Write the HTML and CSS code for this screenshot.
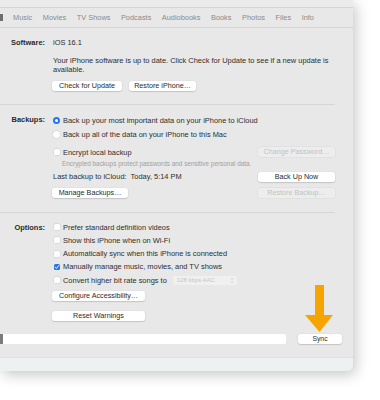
FILE: index.html
```html
<!DOCTYPE html>
<html>
<head>
<meta charset="utf-8">
<link rel="stylesheet" href="styles.css">
</head>
<body>
<div class="window">
  <div class="topstrip"></div>
  <nav class="tabs">
    <span class="tab-mark"></span>
    <span>Music</span><span>Movies</span><span>TV Shows</span><span>Podcasts</span><span>Audiobooks</span><span>Books</span><span>Photos</span><span>Files</span><span>Info</span>
  </nav>
  <main class="content">
    <section class="sec sec-software">
      <div class="label">Software:</div>
      <div class="body">
        <div class="line">iOS 16.1</div>
        <p class="para">Your iPhone software is up to date. Click Check for Update to see if a new update is available.</p>
        <div class="btnrow">
          <button class="btn w-check">Check for Update</button>
          <button class="btn w-restore">Restore iPhone…</button>
        </div>
      </div>
    </section>
    <section class="sec sec-backups">
      <div class="label">Backups:</div>
      <div class="body">
        <div class="opt opt-tall"><span class="radio on"></span>Back up your most important data on your iPhone to iCloud</div>
        <div class="opt opt-tall"><span class="radio"></span>Back up all of the data on your iPhone to this Mac</div>
        <div class="split r-encrypt">
          <div class="opt"><span class="check"></span>Encrypt local backup</div>
          <button class="btn side disabled">Change Password…</button>
        </div>
        <div class="hint">Encrypted backups protect passwords and sensitive personal data.</div>
        <div class="split r-last">
          <div class="line">Last backup to iCloud:&nbsp; Today, 5:14 PM</div>
          <button class="btn side">Back Up Now</button>
        </div>
        <div class="split r-manage">
          <button class="btn w-manage">Manage Backups…</button>
          <button class="btn side disabled">Restore Backup…</button>
        </div>
      </div>
    </section>
    <section class="sec sec-options">
      <div class="label">Options:</div>
      <div class="body">
        <div class="opt orow"><span class="check"></span>Prefer standard definition videos</div>
        <div class="opt orow"><span class="check"></span>Show this iPhone when on Wi-Fi</div>
        <div class="opt orow"><span class="check"></span>Automatically sync when this iPhone is connected</div>
        <div class="opt orow"><span class="check on"><svg viewBox="0 0 10 10" width="6" height="6"><path d="M2 5.2 L4.2 7.4 L8 2.6" fill="none" stroke="#fff" stroke-width="1.6" stroke-linecap="round" stroke-linejoin="round"/></svg></span>Manually manage music, movies, and TV shows</div>
        <div class="opt orow"><span class="check"></span>Convert higher bit rate songs to<span class="popup"><span class="pop-text">128 kbps AAC</span><svg class="chev" width="4" height="7" viewBox="0 0 4 7"><path d="M0.6 2.6 L2 1.2 L3.4 2.6 M0.6 4.4 L2 5.8 L3.4 4.4" fill="none" stroke="#c8c8c8" stroke-width="0.7"/></svg></span></div>
        <button class="btn w-config b-config">Configure Accessibility…</button>
        <button class="btn w-config b-reset">Reset Warnings</button>
      </div>
    </section>
  </main>
  <div class="bottombar">
    <div class="capacity"><span class="cap-seg"></span></div>
    <button class="btn sync">Sync</button>
  </div>
  <div class="footer"></div>
</div>
<svg class="arrow" width="28" height="47" viewBox="0 0 28 47">
  <path d="M10 0 H19 V30 H28 L14.5 47 L0 30 H10 Z" fill="#f6a500"/>
</svg>
</body>
</html>
```
FILE: styles.css
```css
html, body {
  margin: 0;
  padding: 0;
}
body {
  width: 380px;
  height: 400px;
  overflow: hidden;
  background: #ffffff;
  font-family: "Liberation Sans", Arial, sans-serif;
  font-size: 7.45px;
  color: #2e2e2e;
  position: relative;
}
.window {
  width: 353px;
  height: 371px;
  background: #e8e8e8;
  border-bottom-right-radius: 6px;
  box-shadow: 3px 4px 14px rgba(0, 0, 0, 0.22);
  display: flex;
  flex-direction: column;
  overflow: hidden;
}
.topstrip {
  height: 7px;
  flex: none;
  background: #ebebeb;
  border-bottom: 1px solid #d5d5d5;
}
.tabs {
  height: 19px;
  flex: none;
  display: flex;
  align-items: center;
  gap: 10.5px;
  color: #8b8b8b;
  font-size: 7.4px;
  border-bottom: 1px solid #d5d5d5;
}
.tab-mark {
  width: 3px;
  height: 7px;
  background: #6e6e6e;
  margin-right: -0.5px;
}
.content {
  flex: 1;
}
.sec {
  display: flex;
  width: 335px;
}
.label {
  width: 45px;
  flex: none;
  text-align: right;
  font-weight: bold;
  color: #2a2a2a;
}
.body {
  margin-left: 8px;
  flex: 1;
  display: flex;
  flex-direction: column;
  align-items: flex-start;
}
.sec-software {
  padding: 10px 0 13px;
  border-bottom: 1px solid #d6d6d6;
}
.sec-software .label,
.line {
  line-height: 10px;
  height: 10px;
}
.para {
  margin: 7.5px 0 0;
  width: 276px;
  line-height: 9px;
}
.btnrow {
  display: flex;
  gap: 7px;
  margin-top: 7.5px;
  margin-left: -1px;
}
.btn {
  display: block;
  height: 10px;
  padding: 0;
  border: none;
  border-radius: 2.5px;
  background: #ffffff;
  box-shadow: 0 0.5px 1.2px rgba(0, 0, 0, 0.28);
  font-family: inherit;
  font-size: 7.2px;
  line-height: 10px;
  color: #2a2a2a;
  text-align: center;
  white-space: nowrap;
}
.btn.disabled {
  background: #ededed;
  color: #c2c2c2;
  box-shadow: 0 0 0 0.5px rgba(0, 0, 0, 0.06);
}
.w-check { width: 70px; }
.w-restore { width: 67px; }
.w-manage { width: 76px; margin-left: -1px; }
.w-config { width: 93px; margin-left: -1px; }
.side { width: 77px; flex: none; }

.sec-backups {
  padding: 8px 0 14px;
  border-bottom: 1px solid #d6d6d6;
}
.sec-backups .label {
  line-height: 14px;
}
.opt {
  display: flex;
  align-items: center;
}
.opt-tall {
  height: 14px;
}
.radio {
  width: 7px;
  height: 7px;
  box-sizing: border-box;
  border-radius: 50%;
  background: #ffffff;
  box-shadow: 0 0 0 0.4px rgba(0, 0, 0, 0.12);
  margin-right: 3px;
  flex: none;
}
.radio.on {
  background: #ffffff;
  border: 2.3px solid #2476f0;
  box-shadow: none;
}
.check {
  width: 6px;
  height: 6px;
  border-radius: 1.5px;
  background: #ffffff;
  box-shadow: 0 0 0 0.4px rgba(0, 0, 0, 0.12);
  margin: 0 3.5px 0 0.5px;
  flex: none;
  display: flex;
  align-items: center;
  justify-content: center;
}
.check.on {
  background: #2476f0;
  box-shadow: none;
}
.split {
  display: flex;
  align-items: center;
  justify-content: space-between;
  align-self: stretch;
  height: 10px;
}
.r-encrypt { margin-top: 6px; }
.r-last { margin-top: 4px; }
.r-manage { margin-top: 6px; }
.hint {
  margin-top: 3px;
  height: 8px;
  line-height: 8px;
  font-size: 6.4px;
  color: #a0a0a0;
  padding-left: 9px;
}

.sec-options {
  padding: 7.5px 0 0;
}
.sec-options .label {
  line-height: 13.25px;
}
.orow {
  height: 13.25px;
}
.popup {
  display: flex;
  align-items: center;
  justify-content: space-between;
  width: 64px;
  height: 9px;
  margin-left: 6px;
  padding: 0 3px 0 4px;
  box-sizing: border-box;
  background: #f0f0f0;
  border-radius: 2px;
  color: #c6c6c6;
  font-size: 6px;
  flex: none;
}
.chev {
  display: block;
}
.b-config { margin-top: 4.25px; }
.b-reset { margin-top: 10px; }

.bottombar {
  flex: none;
  display: flex;
  align-items: center;
  height: 10px;
  padding-bottom: 13px;
}
.capacity {
  width: 286px;
  height: 10px;
  background: #ffffff;
  border-radius: 0 2px 2px 0;
  display: flex;
}
.cap-seg {
  width: 3px;
  background: #7c7c7c;
}
.sync {
  width: 44px;
  margin-left: 12px;
  font-size: 6.8px;
}
.footer {
  height: 13px;
  flex: none;
  background: #eef1f1;
  border-top: 1px solid #dde0e0;
}
.arrow {
  position: absolute;
  left: 305px;
  top: 285px;
}
```
